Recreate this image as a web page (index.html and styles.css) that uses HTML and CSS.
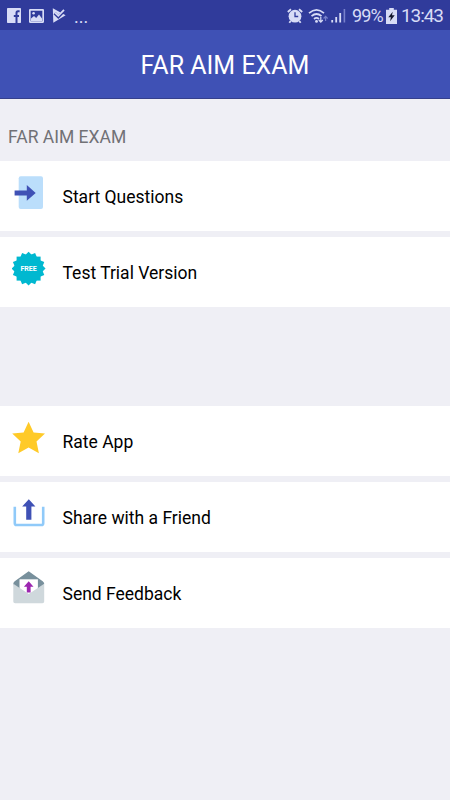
FILE: index.html
```html
<!DOCTYPE html>
<html lang="en">
<head>
<meta charset="utf-8">
<title>FAR AIM EXAM</title>
<link rel="stylesheet" href="styles.css">
</head>
<body>
<div class="status">
  <div class="notifications">
    <svg width="14" height="15" viewBox="0 0 14 15"><rect width="14" height="15" rx=".7" fill="#d8dcf6"/><path d="M12.6 3.2H11Q9.5 3.2 9.5 5v10M6.8 8h5.2" fill="none" stroke="#303b9b" stroke-width="2"/></svg>
    <svg width="15" height="14" viewBox="0 0 15 14"><rect x=".8" y=".8" width="13.4" height="12.4" rx=".6" fill="none" stroke="#d8dcf6" stroke-width="1.7"/><path d="M2 12V9.5L5 7l2.2 2L10 5.5l3 4V12z" fill="#d8dcf6"/><circle cx="4.6" cy="4.3" r="1.3" fill="#d8dcf6"/></svg>
    <svg width="14" height="15" viewBox="0 0 14 15"><path d="M.8.3 13.6 7.2 1.3 14.8z" fill="#d8dcf6"/><path d="m2.6 5.2 3.7 3.6L13 1.8" fill="none" stroke="#303b9b" stroke-width="3"/><path d="m3 4.6 3.3 3.2L12 1.8" fill="none" stroke="#d8dcf6" stroke-width="1.8"/></svg>
    <span class="more">...</span>
  </div>
  <div class="system">
    <svg width="16" height="16" viewBox="0 0 16 16"><circle cx="8" cy="8.2" r="6.4" fill="#d8dcf6"/><path d="M.8 4 4 1.2M12 1.2 15.2 4M3.7 13l-1.4 1.8M12.3 13l1.4 1.8" stroke="#d8dcf6" stroke-width="1.8"/><path d="M8 4.3v4.2h3.2" fill="none" stroke="#303b9b" stroke-width="1.3"/></svg>
    <svg class="wifi" width="21" height="16" viewBox="0 0 21 16"><path d="M1 5.2Q8.5-1.4 16 5.2M3.5 8.2q5-4.4 10 0M6 11q2.5-2.2 5 0" fill="none" stroke="#d8dcf6" stroke-width="1.7"/><circle cx="8.5" cy="13.4" r="1.4" fill="#d8dcf6"/><path d="M12.8 9v5m-2-2 2 2.2 2-2.2" fill="none" stroke="#d8dcf6" stroke-width="1.2"/><path d="M17.6 13V8.5m-2 2 2-2.2 2 2.2" fill="none" stroke="#7881cb" stroke-width="1.2"/></svg>
    <svg class="signal" width="15" height="15" viewBox="0 0 15 15"><path d="M1.2 12v2.5M5.2 9v5.5M9.2 5v9.5" stroke="#d8dcf6" stroke-width="1.8"/><path d="M13.4 1v13.5" stroke="#7881cb" stroke-width="1.6"/></svg>
    <span class="percent">99%</span>
    <svg class="battery" width="11" height="16" viewBox="0 0 11 16"><path d="M3.2 0h4.6v1.7H11V16H0V1.7h3.2z" fill="#d8dcf6"/><path d="M6.7 3.7 2.3 9.2h2.6l-.8 4 4.6-5.9H6z" fill="#15182d"/></svg>
    <span class="clock">13:43</span>
  </div>
</div>
<header class="header"><h1>FAR AIM EXAM</h1></header>
<main>
  <h2 class="section-title">FAR AIM EXAM</h2>
  <nav class="group">
    <a class="row">
      <svg class="icon" viewBox="0 0 36 36"><rect x="6.7" y="2.2" width="24.3" height="32.8" rx="2" fill="#bbdefb"/><path d="M2.6 16.4h12.2v-5.3l8.9 7.8-8.9 7.8v-5.3H2.6z" fill="#3f51b5"/></svg>
      <span class="label">Start Questions</span>
    </a>
    <a class="row">
      <svg class="icon" viewBox="0 0 36 36"><g transform="translate(16.6 18.6)"><g fill="#00b8d0"><rect x="-12" y="-12" width="24" height="24"/><rect x="-12" y="-12" width="24" height="24" transform="rotate(22.5)"/><rect x="-12" y="-12" width="24" height="24" transform="rotate(45)"/><rect x="-12" y="-12" width="24" height="24" transform="rotate(67.5)"/></g><text class="free" y="2.5" text-anchor="middle" textLength="16.4" lengthAdjust="spacingAndGlyphs">FREE</text></g></svg>
      <span class="label">Test Trial Version</span>
    </a>
  </nav>
  <nav class="group">
    <a class="row">
      <svg class="icon" viewBox="0 0 36 36"><path d="m16.6 2.7 5 10.7 11.4 1.2-8.5 8 2.4 11.6-10.3-5.8-10.3 5.8 2.4-11.6-8.5-8 11.4-1.2z" fill="#ffca28"/></svg>
      <span class="label">Rate App</span>
    </a>
    <a class="row">
      <svg class="icon" viewBox="0 0 36 36"><path d="M2.8 11.8v16.4q0 1.8 1.8 1.8h24.8q1.8 0 1.8-1.8V11.8" fill="none" stroke="#90caf9" stroke-width="2.6"/><path d="m16.8 4.2 6.6 7.4h-4v13.1h-5.2V11.6h-4z" fill="#3f51b5"/></svg>
      <span class="label">Share with a Friend</span>
    </a>
    <a class="row">
      <svg class="icon" viewBox="0 0 36 36"><path d="M1.3 12.8Q1.3 11.3 2.7 10.3L16.7.3l14 10q1.5 1 1.5 2.5L29 20.3H4z" fill="#78909c"/><path d="M7.5 8.3h18.4v15H7.5z" fill="#fff"/><path d="m1.3 12.8 15.5 10.1 15.4-10.1v17.6q0 1.8-1.8 1.8H3.1q-1.8 0-1.8-1.8z" fill="#cfd8dc"/><path d="m16.7 10.3 4.8 5.4h-2.9v5.8h-3.8v-5.8h-2.9z" fill="#9c27b0"/></svg>
      <span class="label">Send Feedback</span>
    </a>
  </nav>
</main>
</body>
</html>
```

FILE: styles.css
```css
* { box-sizing: border-box; }
body {
  margin: 0;
  min-height: 800px;
  background: #efeff5;
  font-family: Roboto, "Liberation Sans", sans-serif;
  color: #000;
}
svg { display: block; flex: none; }
.status {
  height: 30px;
  padding: 1px 7px 0;
  display: flex;
  justify-content: space-between;
  align-items: center;
  background: #303b9b;
  color: #d8dcf6;
}
.notifications, .system { display: flex; align-items: center; }
.notifications svg { margin-right: 8px; }
.more { font-size: 18px; letter-spacing: 0; line-height: 22px; padding-top: 2px; }
.wifi { margin-left: 5px; }
.signal { margin-left: 2px; }
.percent { margin-left: 6px; font-size: 18px; width: 31px; letter-spacing: -.9px; }
.battery { margin-left: 3px; }
.clock { margin-left: 4px; font-size: 19px; width: 42px; letter-spacing: -1.1px; white-space: nowrap; }
.header {
  height: 69px;
  padding-top: 4px;
  display: flex;
  align-items: center;
  justify-content: center;
  background: #3f51b5;
  border-bottom: 1px solid #35408c;
}
h1, h2 { margin: 0; font-weight: 400; }
h1 { color: #fff; font-size: 25px; line-height: 30px; }
.section-title {
  height: 62px;
  padding: 27px 8px 0;
  font-size: 17.5px;
  line-height: 23px;
  color: #717176;
}
.group { display: grid; gap: 6px; margin-bottom: 99px; }
.row {
  height: 70px;
  padding: 0 12px;
  display: flex;
  align-items: flex-start;
  background: #fff;
}
.icon { width: 36px; height: 36px; margin-top: 13px; }
.label { margin: 25px 0 0 14.5px; font-size: 17.5px; line-height: 22px; }
.free { fill: #fff; font: 700 7.4px Roboto, sans-serif; }
```
